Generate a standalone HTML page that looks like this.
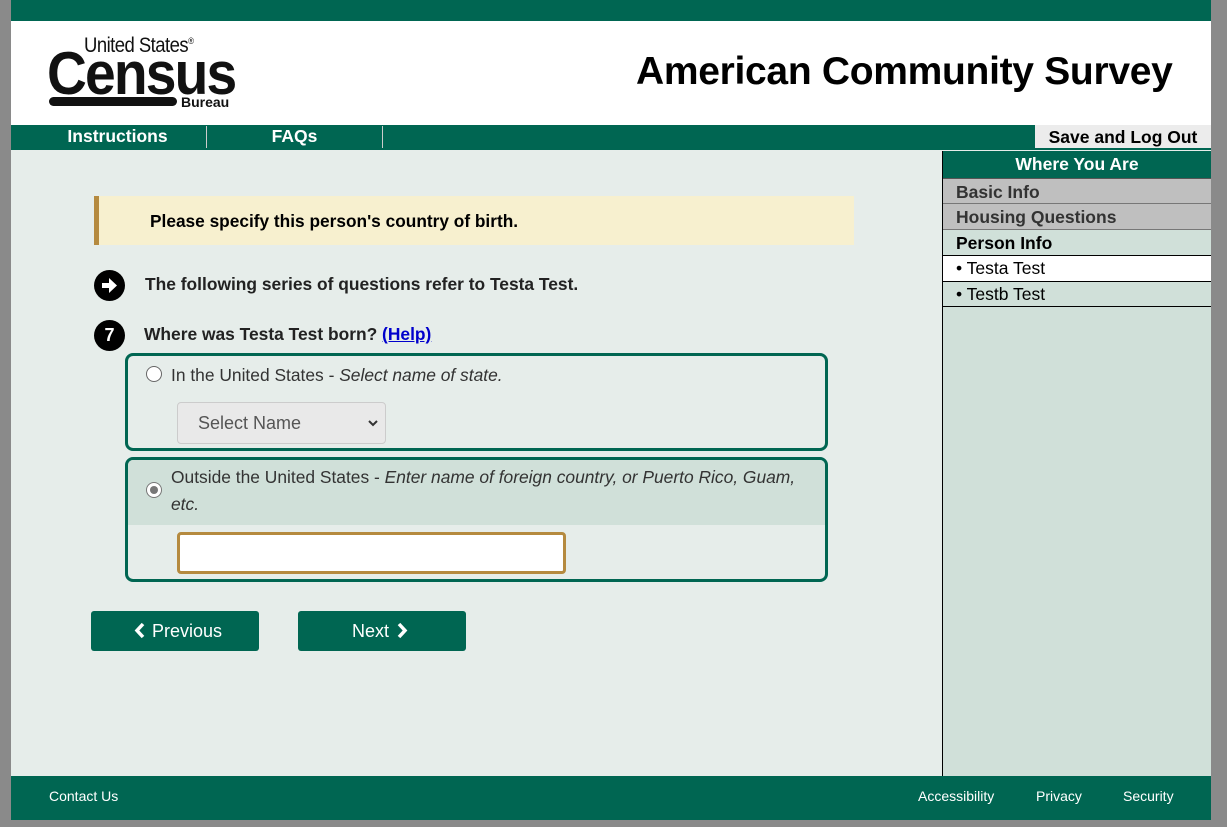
<!DOCTYPE html>
<html><head><style>
*{margin:0;padding:0;box-sizing:border-box}
body{width:1227px;height:827px;background:#8a8a8a;font-family:"Liberation Sans",Arial,sans-serif;position:relative;overflow:hidden}
.win{position:absolute;left:11px;top:0;width:1200px;height:820px;background:#e6edea}
.abs{position:absolute}
.g{background:#006652}
</style></head><body>
<div class="win">
 <div class="abs g" style="left:0;top:0;width:1200px;height:21px"></div>
 <div class="abs" style="left:0;top:21px;width:1200px;height:104px;background:#fff"></div>
 <!-- logo -->
 <div class="abs" style="left:73px;top:34px;font-size:21px;letter-spacing:-0.6px;color:#111;transform:scaleX(0.88);transform-origin:left">United States<sup style="font-size:9px">®</sup></div>
 <div class="abs" style="left:36px;top:39px;font-size:60px;font-weight:bold;letter-spacing:-2px;color:#111;transform:scaleX(0.92);transform-origin:left">Census</div>
 <div class="abs" style="left:38px;top:97px;width:128px;height:9px;border-radius:5px;background:#111"></div>
 <div class="abs" style="left:170px;top:94px;font-size:14px;font-weight:bold;color:#111">Bureau</div>
 <div class="abs" style="left:625px;top:50px;font-size:39px;font-weight:bold;color:#000;letter-spacing:-0.3px">American Community Survey</div>
 <!-- nav -->
 <div class="abs g" style="left:0;top:125px;width:1200px;height:25px"></div>
 <div class="abs" style="left:0;top:126px;width:213px;text-align:center;color:#fff;font-weight:bold;font-size:17.5px">Instructions</div>
 <div class="abs" style="left:195px;top:126px;width:1px;height:22px;background:#ccc"></div>
 <div class="abs" style="left:196px;top:126px;width:175px;text-align:center;color:#fff;font-weight:bold;font-size:17.5px">FAQs</div>
 <div class="abs" style="left:371px;top:126px;width:1px;height:22px;background:#ccc"></div>
 <div class="abs" style="left:1024px;top:125px;width:176px;height:23px;background:#ececec;text-align:center;font-weight:bold;font-size:17.5px;padding-top:2px">Save and Log Out</div>
 <!-- sidebar -->
 <div class="abs" style="left:931px;top:151px;width:269px;height:625px;background:#d0e0d9;border-left:1px solid #000"></div>
 <div class="abs g" style="left:931px;top:151px;width:269px;height:27px;color:#fff;font-weight:bold;font-size:17.5px;text-align:center;padding-top:3px;border-left:1px solid #000">Where You Are</div>
 <div class="abs" style="left:932px;top:178px;width:268px;height:26px;background:#bfbfbf;border-top:1px solid #555;border-bottom:1px solid #777;color:#333;font-weight:bold;font-size:17.5px;padding:3px 0 0 13px">Basic Info</div>
 <div class="abs" style="left:932px;top:204px;width:268px;height:26px;background:#bfbfbf;border-bottom:1px solid #777;color:#333;font-weight:bold;font-size:17.5px;padding:3px 0 0 13px">Housing Questions</div>
 <div class="abs" style="left:932px;top:230px;width:268px;height:26px;font-weight:bold;font-size:17.5px;padding:3px 0 0 13px;border-bottom:1px solid #000">Person Info</div>
 <div class="abs" style="left:932px;top:256px;width:268px;height:26px;background:#fff;font-size:17.5px;padding:2px 0 0 13px;border-bottom:1px solid #000">• Testa Test</div>
 <div class="abs" style="left:932px;top:282px;width:268px;height:25px;font-size:17.5px;padding:2px 0 0 13px;border-bottom:1px solid #000">• Testb Test</div>
 <!-- main -->
 <div class="abs" style="left:83px;top:196px;width:760px;height:49px;background:#f7f0cf;border-left:5px solid #b58a3f;font-weight:bold;font-size:17.3px;padding:15px 0 0 51px">Please specify this person's country of birth.</div>
 <div class="abs" style="left:83px;top:270px;width:31px;height:31px;border-radius:50%;background:#000"><svg width="31" height="31" viewBox="0 0 31 31"><path d="M8 13h7v-5l8 7.5-8 7.5v-5H8z" fill="#fff"/></svg></div>
 <div class="abs" style="left:134px;top:274px;font-weight:bold;font-size:17.4px;color:#222">The following series of questions refer to Testa Test.</div>
 <div class="abs" style="left:83px;top:320px;width:31px;height:31px;border-radius:50%;background:#000;color:#fff;font-weight:bold;font-size:18px;text-align:center;line-height:31px">7</div>
 <div class="abs" style="left:133px;top:324px;font-weight:bold;font-size:17.4px;color:#222">Where was Testa Test born? <span style="color:#00c;text-decoration:underline">(Help)</span></div>
 <div class="abs" style="left:114px;top:353px;width:703px;height:98px;border:3px solid #006652;border-radius:8px"></div>
 <div class="abs" style="left:135px;top:366px;width:16px;height:16px;border-radius:50%;border:1.5px solid #666;background:#fff"></div>
 <div class="abs" style="left:160px;top:365px;font-size:17.4px;color:#333">In the United States - <i>Select name of state.</i></div>
 <div class="abs" style="left:166px;top:402px;width:209px;height:42px;border:1px solid #ccc;border-radius:4px;background:#e9e9e9;font-size:18px;color:#555;padding:10px 0 0 20px">Select Name<svg style="position:absolute;right:6px;top:16px" width="12" height="10" viewBox="0 0 12 10"><path d="M2 2l4 4 4-4" stroke="#333" stroke-width="2" fill="none"/></svg></div>
 <div class="abs" style="left:114px;top:457px;width:703px;height:125px;border:3px solid #006652;border-radius:8px;overflow:hidden"><div style="height:65px;background:#d0e0d9"></div></div>
 <div class="abs" style="left:135px;top:482px;width:16px;height:16px;border-radius:50%;border:1.5px solid #777;background:#fff"><div style="margin:2.5px;width:8px;height:8px;border-radius:50%;background:#777"></div></div>
 <div class="abs" style="left:160px;top:464px;width:650px;font-size:17.4px;color:#333;line-height:27px">Outside the United States - <i>Enter name of foreign country, or Puerto Rico, Guam, etc.</i></div>
 <div class="abs" style="left:166px;top:532px;width:389px;height:42px;border:3px solid #b58a3f;border-radius:4px;background:#fff"></div>
 <div class="abs g" style="left:80px;top:611px;width:168px;height:40px;border-radius:3px;color:#fff;font-size:18px;line-height:40px"><svg class="abs" style="left:42px;top:11px" width="12" height="17" viewBox="0 0 12 17"><path d="M10 2L4 8.5 10 15" stroke="#fff" stroke-width="3.5" fill="none"/></svg><span class="abs" style="left:61px;top:0">Previous</span></div>
 <div class="abs g" style="left:287px;top:611px;width:168px;height:40px;border-radius:3px;color:#fff;font-size:18px;line-height:40px"><span class="abs" style="left:54px;top:0">Next</span><svg class="abs" style="left:99px;top:11px" width="12" height="17" viewBox="0 0 12 17"><path d="M2 2l6 6.5L2 15" stroke="#fff" stroke-width="3.5" fill="none"/></svg></div>
 <!-- footer -->
 <div class="abs g" style="left:0;top:776px;width:1200px;height:44px"></div>
 <div class="abs" style="left:38px;top:788px;color:#fff;font-size:14px">Contact Us</div>
 <div class="abs" style="left:907px;top:788px;color:#fff;font-size:14px">Accessibility</div>
 <div class="abs" style="left:1025px;top:788px;color:#fff;font-size:14px">Privacy</div>
 <div class="abs" style="left:1112px;top:788px;color:#fff;font-size:14px">Security</div>
</div>
</body></html>
